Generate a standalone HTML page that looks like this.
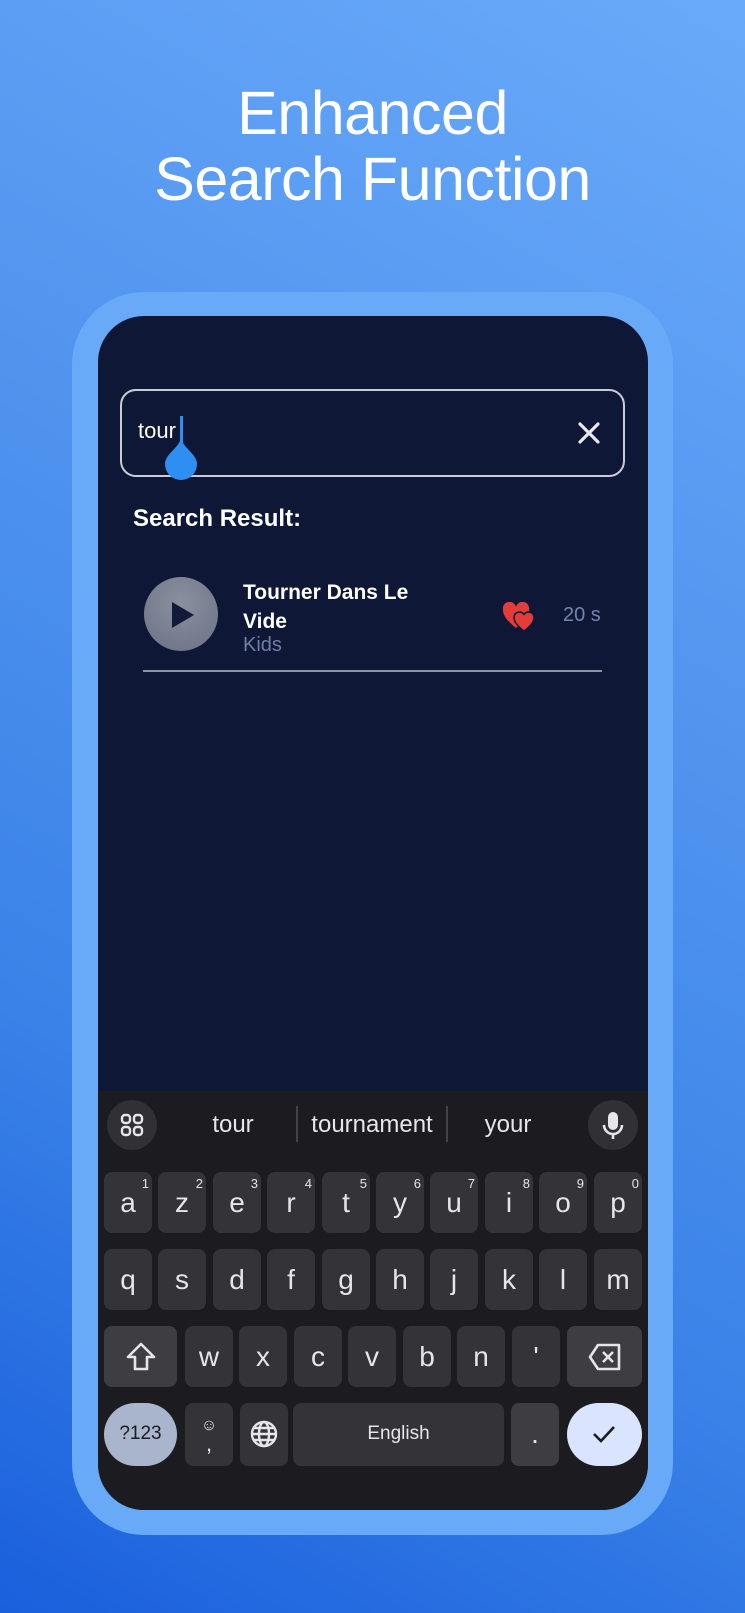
<!DOCTYPE html>
<html><head><meta charset="utf-8"><style>
*{margin:0;padding:0;box-sizing:border-box}
body{width:745px;height:1613px;overflow:hidden;position:relative;font-family:"Liberation Sans",sans-serif;
background:linear-gradient(210deg,#6aaafa 0%,#4f93ee 40%,#3a82e8 70%,#1a5fdc 100%);}
.abs{position:absolute}
.title{left:0;width:745px;text-align:center;color:#fff;font-size:61px;line-height:66px;top:80px;letter-spacing:-0.5px}
.frame{left:72px;top:292px;width:601px;height:1243px;border-radius:72px;background:#68a9f8}
.screen{left:98px;top:316px;width:550px;height:1194px;border-radius:46px;background:#0e1735;overflow:hidden}
.kb{left:0;top:775px;width:550px;height:419px;background:#1c1c20}
.key{position:absolute;width:48px;height:61px;background:#333338;border-radius:8px;color:#e6e6e8;font-size:28px;text-align:center;line-height:62px}
.key sup{position:absolute;right:3px;top:-19px;font-size:13px}
</style></head><body>
<div class="abs title">Enhanced<br>Search Function</div>
<div class="abs frame"></div>
<div class="abs screen">
  <div class="abs" style="left:22px;top:73px;width:505px;height:88px;border:2px solid #c9ccd6;border-radius:16px"></div>
  <div class="abs" style="left:40px;top:102px;color:#fff;font-size:22px">tour</div>
  <div class="abs" style="left:82px;top:100px;width:3px;height:30px;background:#2f8ff0"></div>
  <svg class="abs" style="left:66px;top:122px" width="34" height="42" viewBox="0 0 34 42"><path d="M17 0 C19 10 33 16 33 26 A16 16 0 0 1 1 26 C1 16 15 10 17 0Z" fill="#2f8ff0"/></svg>
  <svg class="abs" style="left:479px;top:105px" width="24" height="24" viewBox="0 0 24 24"><path d="M3 3L21 21M21 3L3 21" stroke="#e8e8ee" stroke-width="3.2" stroke-linecap="round"/></svg>
  <div class="abs" style="left:35px;top:189px;color:#fff;font-size:24px;font-weight:bold">Search Result:</div>
  <div class="abs" style="left:46px;top:261px;width:74px;height:74px;border-radius:50%;background:radial-gradient(circle at 50% 35%,#8a909e,#6a7185)"></div>
  <svg class="abs" style="left:72px;top:285px" width="26" height="28" viewBox="0 0 26 28"><path d="M2 1L24 14L2 27Z" fill="#111a36"/></svg>
  <div class="abs" style="left:145px;top:262px;color:#fff;font-size:21px;font-weight:bold;line-height:29px">Tourner Dans Le<br>Vide</div>
  <div class="abs" style="left:145px;top:318px;color:#6f7fa6;font-size:20px">Kids</div>
  <svg class="abs" style="left:405px;top:286px" width="34" height="30" viewBox="0 0 34 30"><path d="M13 26C3 18 0 13 0 8A6.5 6.5 0 0 1 13 5A6.5 6.5 0 0 1 26 8C26 13 23 18 13 26Z" fill="#e63b3b"/><path d="M21 29C13 23 11 19 11 15A5.5 5.5 0 0 1 21 12.5A5.5 5.5 0 0 1 31 15C31 19 29 23 21 29Z" fill="#e63b3b" stroke="#0e1735" stroke-width="1.5"/></svg>
  <div class="abs" style="left:465px;top:288px;color:#7384ab;font-size:20px">20 s</div>
  <div class="abs" style="left:45px;top:354px;width:459px;height:2px;background:#8d93a3"></div>

  <div class="abs kb">
    <div class="abs" style="left:9px;top:9px;width:50px;height:50px;border-radius:50%;background:#303035"></div>
    <svg class="abs" style="left:22px;top:22px" width="24" height="24" viewBox="0 0 24 24" fill="none" stroke="#e6e6e8" stroke-width="2.4"><rect x="2" y="2" width="8" height="8" rx="3"/><rect x="14" y="2" width="8" height="8" rx="3"/><rect x="2" y="14" width="8" height="8" rx="3"/><rect x="14" y="14" width="8" height="8" rx="3"/></svg>
    <div class="abs" style="left:80px;top:20px;width:110px;text-align:center;color:#e6e6e8;font-size:24px">tour</div>
    <div class="abs" style="left:198px;top:15px;width:2px;height:36px;background:#444"></div>
    <div class="abs" style="left:200px;top:20px;width:148px;text-align:center;color:#e6e6e8;font-size:24px">tournament</div>
    <div class="abs" style="left:348px;top:15px;width:2px;height:36px;background:#444"></div>
    <div class="abs" style="left:355px;top:20px;width:110px;text-align:center;color:#e6e6e8;font-size:24px">your</div>
    <div class="abs" style="left:490px;top:9px;width:50px;height:50px;border-radius:50%;background:#303035"></div>
    <svg class="abs" style="left:503px;top:20px" width="24" height="30" viewBox="0 0 24 30"><rect x="7" y="1" width="10" height="18" rx="5" fill="#e6e6e8"/><path d="M3 14a9 9 0 0 0 18 0M12 23v5" stroke="#e6e6e8" stroke-width="2.6" fill="none"/></svg>

    <div class="key" style="left:6px;top:81px">a<sup>1</sup></div>
    <div class="key" style="left:60px;top:81px">z<sup>2</sup></div>
    <div class="key" style="left:115px;top:81px">e<sup>3</sup></div>
    <div class="key" style="left:169px;top:81px">r<sup>4</sup></div>
    <div class="key" style="left:224px;top:81px">t<sup>5</sup></div>
    <div class="key" style="left:278px;top:81px">y<sup>6</sup></div>
    <div class="key" style="left:332px;top:81px">u<sup>7</sup></div>
    <div class="key" style="left:387px;top:81px">i<sup>8</sup></div>
    <div class="key" style="left:441px;top:81px">o<sup>9</sup></div>
    <div class="key" style="left:496px;top:81px">p<sup>0</sup></div>

    <div class="key" style="left:6px;top:158px">q</div>
    <div class="key" style="left:60px;top:158px">s</div>
    <div class="key" style="left:115px;top:158px">d</div>
    <div class="key" style="left:169px;top:158px">f</div>
    <div class="key" style="left:224px;top:158px">g</div>
    <div class="key" style="left:278px;top:158px">h</div>
    <div class="key" style="left:332px;top:158px">j</div>
    <div class="key" style="left:387px;top:158px">k</div>
    <div class="key" style="left:441px;top:158px">l</div>
    <div class="key" style="left:496px;top:158px">m</div>

    <div class="key" style="left:6px;top:235px;width:73px;background:#3d3d42"></div>
    <svg class="abs" style="left:27px;top:250px" width="32" height="32" viewBox="0 0 32 32"><path d="M16 3L3 16H10V28H22V16H29Z" fill="none" stroke="#e6e6e8" stroke-width="2.6" stroke-linejoin="round"/></svg>
    <div class="key" style="left:87px;top:235px">w</div>
    <div class="key" style="left:141px;top:235px">x</div>
    <div class="key" style="left:196px;top:235px">c</div>
    <div class="key" style="left:250px;top:235px">v</div>
    <div class="key" style="left:305px;top:235px">b</div>
    <div class="key" style="left:359px;top:235px">n</div>
    <div class="key" style="left:414px;top:235px">'</div>
    <div class="key" style="left:469px;top:235px;width:75px;background:#3d3d42"></div>
    <svg class="abs" style="left:490px;top:252px" width="34" height="28" viewBox="0 0 34 28"><path d="M10 2H31V26H10L2 14Z" fill="none" stroke="#e6e6e8" stroke-width="2.6" stroke-linejoin="round"/><path d="M15 9L25 19M25 9L15 19" stroke="#e6e6e8" stroke-width="2.6"/></svg>

    <div class="key" style="left:6px;top:312px;width:73px;height:63px;border-radius:32px;background:#a9b4cd;color:#1c1c20;font-size:19px;line-height:62px">?123</div>
    <div class="key" style="left:87px;top:312px;height:63px"><span style="position:absolute;left:0;width:48px;top:-8px;font-size:16px">☺</span><span style="position:absolute;left:0;width:48px;top:10px;font-size:22px">,</span></div>
    <div class="key" style="left:142px;top:312px;height:63px"></div>
    <svg class="abs" style="left:151px;top:328px" width="30" height="30" viewBox="0 0 30 30" fill="none" stroke="#e6e6e8" stroke-width="2.4"><circle cx="15" cy="15" r="12"/><ellipse cx="15" cy="15" rx="5" ry="12"/><path d="M3 15H27M5 9H25M5 21H25"/></svg>
    <div class="key" style="left:195px;top:312px;width:211px;height:63px;font-size:19px;line-height:62px">English</div>
    <div class="key" style="left:413px;top:312px;height:63px;background:#3d3d42">.</div>
    <div class="key" style="left:469px;top:312px;width:75px;height:63px;border-radius:32px;background:#dbe4ff"></div>
    <svg class="abs" style="left:493px;top:332px" width="26" height="22" viewBox="0 0 26 22"><path d="M3 11L10 18L23 4" fill="none" stroke="#1c1c20" stroke-width="2.6"/></svg>
  </div>
</div>
</body></html>
